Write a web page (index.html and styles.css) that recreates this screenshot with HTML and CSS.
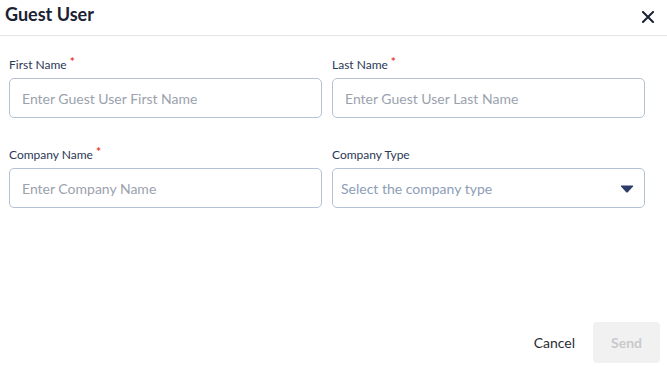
FILE: index.html
```html
<!DOCTYPE html>
<html lang="en">
<head>
    <meta charset="UTF-8">
    <meta name="viewport" content="width=device-width, initial-scale=1.0">
    <title>Guest User</title>
    <link rel="stylesheet" href="styles.css">
</head>
<body>
    <div class="modal">
        <div class="modal-header">
            <h1>Guest User</h1>
            <button class="close" type="button" aria-label="Close">
                <svg width="12" height="12" viewBox="0 0 12 12">
                    <path d="M1 1 L11 11 M11 1 L1 11" stroke="#1b2236" stroke-width="2" stroke-linecap="square" fill="none"/>
                </svg>
            </button>
        </div>
        <form class="guest-form">
            <div class="field">
                <label for="firstName">First Name<span class="req">*</span></label>
                <input type="text" id="firstName" placeholder="Enter Guest User First Name">
            </div>
            <div class="field">
                <label for="lastName">Last Name<span class="req">*</span></label>
                <input type="text" id="lastName" placeholder="Enter Guest User Last Name">
            </div>
            <div class="field">
                <label for="companyName">Company Name<span class="req">*</span></label>
                <input type="text" id="companyName" placeholder="Enter Company Name">
            </div>
            <div class="field">
                <label>Company Type</label>
                <div class="select">
                    <span class="select-placeholder">Select the company type</span>
                    <svg width="14" height="8" viewBox="0 0 14 8">
                        <path d="M1.5 0.5 H12.5 Q13.8 0.5 13 1.6 L8 7 Q7 8 6 7 L1 1.6 Q0.2 0.5 1.5 0.5 Z" fill="#2b3d66"/>
                    </svg>
                </div>
            </div>
        </form>
        <div class="modal-footer">
            <button type="button" class="btn btn-cancel">Cancel</button>
            <button type="button" class="btn btn-send" disabled>Send</button>
        </div>
    </div>
</body>
</html>
```

FILE: styles.css
```css
body {
    margin: 0;
    font-family: 'Lato', 'Liberation Sans', sans-serif;
    background-color: white;
    color: #1b2133;
}
.modal {
    display: flex;
    flex-direction: column;
    min-height: 100vh;
}
.modal-header {
    display: flex;
    justify-content: space-between;
    align-items: flex-start;
    height: 32px;
    padding: 3px 13px 0 5px;
    border-bottom: 1px solid #e6e6e8;
}
h1 {
    margin: 0;
    font-size: 18px;
    font-weight: 700;
    color: #1b2133;
}
.close {
    border: none;
    background: none;
    padding: 0;
    margin-top: 8px;
    width: 12px;
    height: 12px;
    cursor: pointer;
}
.close svg {
    display: block;
}
.guest-form {
    display: grid;
    grid-template-columns: 1fr 1fr;
    column-gap: 10px;
    row-gap: 30px;
    padding: 22px 22px 0 9px;
}
label {
    display: block;
    font-size: 12px;
    line-height: 14px;
    color: #2b3857;
    margin-bottom: 6px;
}
.req {
    color: #e8392f;
    font-size: 12px;
    font-weight: 700;
    vertical-align: 3px;
    line-height: 0;
    margin-left: 3px;
}
input[type="text"],
.select {
    box-sizing: border-box;
    width: 100%;
    height: 40px;
    border: 1px solid #b4c1d4;
    border-radius: 5px;
    font-family: inherit;
    font-size: 14px;
    background: white;
}
input[type="text"] {
    display: block;
    padding: 0 12px;
    color: #1b2133;
    outline: none;
}
input::placeholder {
    color: #9ba2ad;
}
.select {
    display: flex;
    align-items: center;
    justify-content: space-between;
    padding: 0 10px 0 8px;
}
.select-placeholder {
    color: #8d9db7;
}
.select svg {
    display: block;
    margin-top: 1px;
}
.modal-footer {
    margin-top: auto;
    display: flex;
    justify-content: flex-end;
    padding: 0 7px 4px 0;
}
.btn {
    height: 41px;
    padding: 0 18px;
    border: none;
    border-radius: 4px;
    font-family: inherit;
    font-size: 14px;
    background: none;
    cursor: pointer;
}
.btn-cancel {
    color: #2a2d33;
    font-weight: 400;
}
.btn-send {
    background-color: #f1f1f2;
    color: #c9c9cc;
    font-weight: 700;
    cursor: default;
}
```
